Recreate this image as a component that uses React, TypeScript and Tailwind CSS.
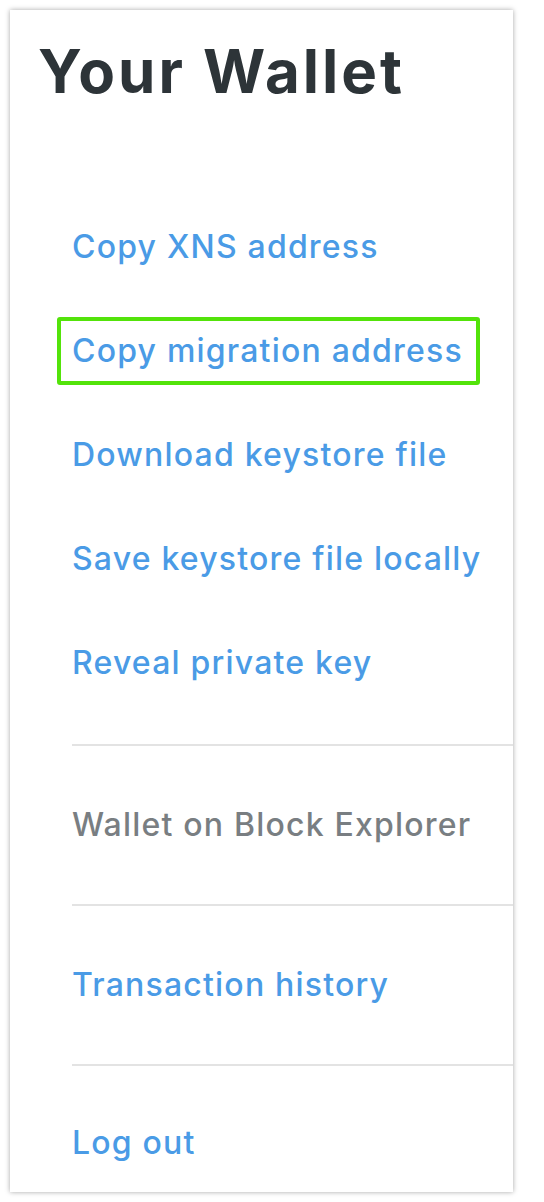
const font = { fontFamily: "Inter, 'Noto Sans', sans-serif" };

const mainItems = [
  "Copy XNS address",
  "Copy migration address",
  "Download keystore file",
  "Save keystore file locally",
  "Reveal private key",
];

const linkText = "text-[32px] font-medium leading-[40px] tracking-[1.2px] text-[#4a9be6]";

export default function App() {
  return (
    <div className="min-h-screen bg-white p-[10px]" style={font}>
      <div className="h-[1182px] w-[503px] overflow-hidden bg-white shadow-[0_0_5px_rgba(0,0,0,0.35)]">
        <div className="h-[185px] pl-[28px] pt-[21px]">
          <h1 className="text-[60px] font-bold leading-[80px] tracking-[3px] text-[#2d3438]">
            Your Wallet
          </h1>
        </div>

        <div className="ml-[62px] flex flex-col">
          {mainItems.map((label) => (
            <div key={label} className="flex h-[104px] shrink-0 items-center">
              {label === "Copy migration address" ? (
                <span className={`-ml-[15px] rounded-[3px] border-4 border-[#53e30a] py-[10px] pl-[11px] pr-[13px] ${linkText}`}>
                  {label}
                </span>
              ) : (
                <span className={linkText}>{label}</span>
              )}
            </div>
          ))}

          <div className="mt-[29px] border-t-2 border-[#e3e3e3]" />
          <div className="flex h-[158px] shrink-0 items-center">
            <span className="text-[32px] font-medium leading-[40px] tracking-[1.2px] text-[#797e82]">
              Wallet on Block Explorer
            </span>
          </div>

          <div className="border-t-2 border-[#e3e3e3]" />
          <div className="flex h-[158px] shrink-0 items-center">
            <span className={linkText}>Transaction history</span>
          </div>

          <div className="border-t-2 border-[#e3e3e3]" />
          <div className="pt-[57px]">
            <span className={linkText}>Log out</span>
          </div>
        </div>
      </div>
    </div>
  );
}
